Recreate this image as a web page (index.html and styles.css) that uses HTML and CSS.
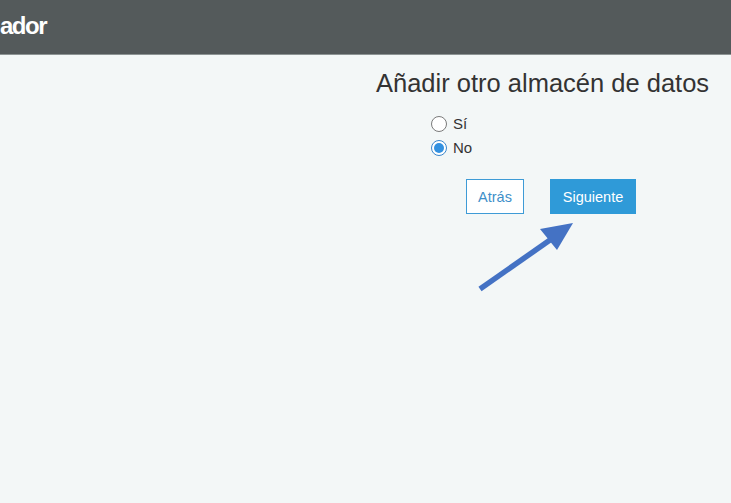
FILE: index.html
```html
<!DOCTYPE html>
<html lang="es">
<head>
<meta charset="utf-8">
<title>Asistente</title>
<link rel="stylesheet" href="styles.css">
</head>
<body>
<header class="topbar"><span class="topbar-title">ador</span></header>
<main class="content">
  <section class="panel">
    <h1 class="panel-title">Añadir otro almacén de datos</h1>
    <div class="options">
      <label class="option"><span class="radio"></span><span>Sí</span></label>
      <label class="option"><span class="radio radio-checked"></span><span>No</span></label>
    </div>
    <div class="actions">
      <button class="btn btn-secondary">Atrás</button>
      <button class="btn btn-primary">Siguiente</button>
    </div>
  </section>
  <svg class="annotation" width="120" height="90" viewBox="0 0 120 90">
    <line x1="10" y1="76" x2="80" y2="27" stroke="#4472c4" stroke-width="5.5"/>
    <polygon points="103,10 70,16 87,37" fill="#4472c4"/>
  </svg>
</main>
</body>
</html>
```
FILE: styles.css
```css
html, body {
  margin: 0;
  padding: 0;
}
body {
  width: 731px;
  height: 503px;
  overflow: hidden;
  background: #f3f7f7;
  font-family: "Liberation Sans", Arial, sans-serif;
  color: #333;
}
.topbar {
  height: 55px;
  box-sizing: border-box;
  background: #545a5b;
  border-bottom: 1px solid #8d9494;
  padding-top: 14px;
  overflow: hidden;
}
.topbar-title {
  display: block;
  color: #fff;
  font-weight: bold;
  font-size: 24px;
  line-height: 24px;
  letter-spacing: -1.5px;
  margin-left: 0;
}
.content {
  position: relative;
  height: 448px;
}
.panel {
  padding-left: 376px;
  padding-top: 13px;
}
.panel-title {
  margin: 0;
  font-weight: normal;
  font-size: 25.5px;
  line-height: 30px;
  color: #333;
}
.options {
  margin-top: 18px;
  margin-left: 55px;
  display: flex;
  flex-direction: column;
  gap: 8px;
}
.option {
  display: flex;
  align-items: center;
  gap: 6px;
  font-size: 15px;
  line-height: 16px;
  color: #333;
}
.radio {
  width: 14px;
  height: 14px;
  border-radius: 50%;
  border: 1px solid #7a7a7a;
  background: #fff;
  box-sizing: content-box;
  position: relative;
}
.radio-checked {
  border-color: #3a86cc;
}
.radio-checked::after {
  content: "";
  position: absolute;
  left: 2px;
  top: 2px;
  width: 10px;
  height: 10px;
  border-radius: 50%;
  background: #3391e0;
}
.actions {
  display: flex;
  gap: 26px;
  margin-top: 23px;
  margin-left: 90px;
}
.btn {
  height: 35px;
  font-family: "Liberation Sans", Arial, sans-serif;
  font-size: 14.5px;
  border-radius: 0;
  cursor: pointer;
  padding: 0;
}
.btn-secondary {
  width: 58px;
  background: #fff;
  border: 1px solid #3e9bd6;
  color: #3e8fc9;
}
.btn-primary {
  width: 86px;
  background: #2f9ad8;
  border: 1px solid #2f9ad8;
  color: #fff;
}
.annotation {
  position: absolute;
  left: 470px;
  top: 158px;
}
```
